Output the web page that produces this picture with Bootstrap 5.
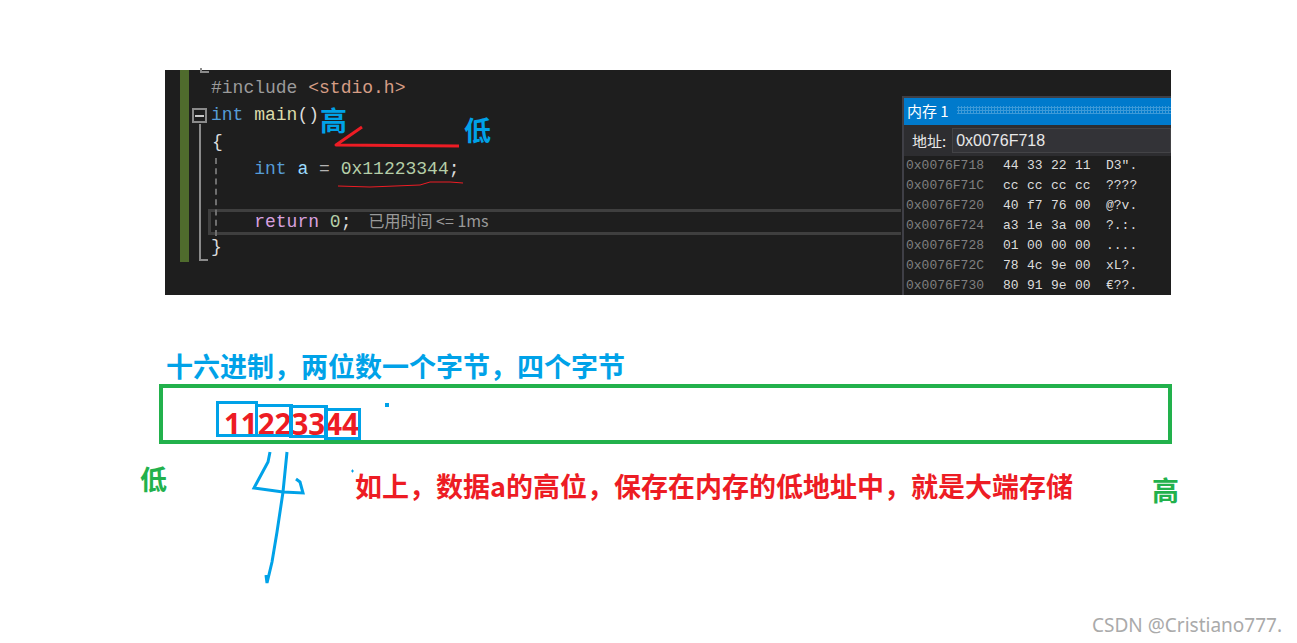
<!DOCTYPE html>
<html lang="zh-CN">
<head>
<meta charset="utf-8">
<title>大端存储</title>
<link href="https://cdn.jsdelivr.net/npm/bootstrap@5.3.0/dist/css/bootstrap.min.css" rel="stylesheet">
<style>
body{background:#fff;font-family:"Noto Sans CJK SC","Liberation Sans",sans-serif}
.stage{width:1297px;height:643px;overflow:hidden;padding:70px 126px 0 165px}
.editor{width:1006px;height:225px;background:#1e1e1e;color:#dcdcdc;font:18px/27px "Liberation Mono","Noto Sans CJK SC",monospace}
.gutter{width:9px;height:192px;margin-left:15px;background:#4f6b2d;flex:none}
.fold{width:22px;flex:none;margin-left:-1px;padding-top:38px}
.fold-box{width:15px;height:15px;margin-left:4px;border:2px solid #8a8a8a;display:flex;align-items:center;justify-content:center}
.fold-box i{display:block;width:9px;height:2px;background:#c8c8c8}
.fold-line{width:9px;height:137px;margin-left:11px;margin-top:1px;border-left:2px solid #8a8a8a;border-bottom:2px solid #8a8a8a}
.fold-top{position:absolute;left:35px;top:-2px;width:9px;height:5px;border-left:2px solid #8a8a8a;border-bottom:2px solid #8a8a8a}
.code{padding-top:5px;flex:1}
.cl{height:27px;margin-left:1px;white-space:pre}
.brace{margin-left:1px}
.cl-cur{height:24px;line-height:21px;padding-left:1px;position:relative;white-space:pre}
.cur-box{position:absolute;left:-2px;top:-1px;width:693px;height:26px;border:3px solid #3f3f3f;border-right:0}
.dash{position:absolute;left:50px;top:88px;height:78px;border-left:2px dashed #6f6f6f}
.k{color:#569cd6}.f{color:#dcdcaa}.v{color:#9cdcfe}.n{color:#b5cea8}.o{color:#b4b4b4}.pp{color:#9b9b9b}.s{color:#d69d85}.r{color:#d8a0df}
.hint{color:#999;font:16px/21px "Noto Sans CJK SC",sans-serif;margin-left:17px}
.memwin{position:absolute;left:737px;top:26px;width:269px;height:199px;background:#1e1e1e;border-left:2px solid #3f3f46;border-top:2px solid #3f3f46;overflow:hidden}
.memtitle{height:27px;background:#007acc;color:#fff;font:15px "Noto Sans CJK SC",sans-serif;padding:0 0 3px 3px;gap:8px}
.memtitle b{flex:1;height:8px;font-weight:400;background-image:radial-gradient(#3d9ad8 1px,transparent 1.2px);background-size:3px 3px}
.memaddr{height:31px;background:#2d2d30;color:#e8e8e8;font:15px "Noto Sans CJK SC",sans-serif;padding:3px 0 3px 8px;gap:6px}
.memaddr span:last-child{flex:1;height:25px;background:#333337;border:1px solid #434346;padding-left:3px;line-height:23px;font-family:"Liberation Sans",sans-serif;font-size:16px}
.memrows{font:13px/20px "Liberation Mono",monospace;padding:0 0 0 2px;color:#dcdcdc}
.memrows .a{width:97px;color:#808080;flex:none}
.memrows .h{width:24px;flex:none}
.memrows .t{margin-left:7px}
.head-blue{color:#00a2e8;font-size:27px;font-weight:700;line-height:36px;margin:53px 0 0 1px;white-space:nowrap}
.greenbox{width:1013px;height:60px;margin:0 0 0 -6px;border:4px solid #22b14c;position:relative}
.digits{position:absolute;left:61px;top:18px;color:#ed1c24;font:700 29.500px/36px "Noto Sans",sans-serif}
.row-note{margin:17px 0 0 -25px;white-space:nowrap;font-size:27px;font-weight:700;line-height:36px}
.low-g{color:#22b14c;width:215px;flex:none}
.note{color:#ed1c24;margin-top:7px;width:797px;flex:none}
.high-g{color:#22b14c;margin-top:11px}
.ann{position:absolute;font-size:27px;font-weight:700;line-height:36px;color:#00a2e8}
.ink{position:absolute;left:0;top:0;pointer-events:none}
.wm{position:absolute;left:1092px;top:610px;font:19px/30px "Noto Sans",sans-serif;color:#aaa;white-space:nowrap}
</style>
</head>
<body>
<div class="stage position-relative">
  <div class="editor d-flex position-relative">
    <div class="gutter"></div>
    <div class="fold">
      <div class="fold-box"><i></i></div>
      <div class="fold-line"></div>
    </div>
    <div class="fold-top"></div>
    <div class="code">
      <div class="cl"><span class="pp">#include</span> <span class="s">&lt;stdio.h&gt;</span></div>
      <div class="cl"><span class="k">int</span> <span class="f">main</span>()</div>
      <div class="cl"><span class="brace">{</span></div>
      <div class="cl">    <span class="k">int</span> <span class="v">a</span> <span class="o">=</span> <span class="n">0x11223344</span>;</div>
      <div class="cl"></div>
      <div class="cl-cur"><span class="cur-box"></span>    <span class="r">return</span> <span class="n">0</span>;<span class="hint">已用时间 &lt;= 1ms</span></div>
      <div class="cl">}</div>
    </div>
    <div class="dash"></div>
    <div class="memwin">
      <div class="memtitle d-flex align-items-center"><span>内存 1</span><b></b></div>
      <div class="memaddr d-flex align-items-center"><span>地址:</span><span>0x0076F718</span></div>
      <div class="memrows">
        <div class="d-flex"><span class="a">0x0076F718</span><span class="h">44</span><span class="h">33</span><span class="h">22</span><span class="h">11</span><span class="t">D3″.</span></div>
        <div class="d-flex"><span class="a">0x0076F71C</span><span class="h">cc</span><span class="h">cc</span><span class="h">cc</span><span class="h">cc</span><span class="t">????</span></div>
        <div class="d-flex"><span class="a">0x0076F720</span><span class="h">40</span><span class="h">f7</span><span class="h">76</span><span class="h">00</span><span class="t">@?v.</span></div>
        <div class="d-flex"><span class="a">0x0076F724</span><span class="h">a3</span><span class="h">1e</span><span class="h">3a</span><span class="h">00</span><span class="t">?.:.</span></div>
        <div class="d-flex"><span class="a">0x0076F728</span><span class="h">01</span><span class="h">00</span><span class="h">00</span><span class="h">00</span><span class="t">....</span></div>
        <div class="d-flex"><span class="a">0x0076F72C</span><span class="h">78</span><span class="h">4c</span><span class="h">9e</span><span class="h">00</span><span class="t">xL?.</span></div>
        <div class="d-flex"><span class="a">0x0076F730</span><span class="h">80</span><span class="h">91</span><span class="h">9e</span><span class="h">00</span><span class="t">€??.</span></div>
      </div>
    </div>
  </div>

  <div class="head-blue">十六进制，两位数一个字节，四个字节</div>
  <div class="greenbox"><div class="digits">11223344</div></div>
  <div class="row-note d-flex">
    <div class="low-g">低</div>
    <div class="note">如上，数据a的高位，保存在内存的低地址中，就是大端存储</div>
    <div class="high-g">高</div>
  </div>

  <div class="ann" style="left:320px;top:102px">高</div>
  <div class="ann" style="left:464px;top:112px">低</div>

  <svg class="ink" width="1297" height="643" viewBox="0 0 1297 643" fill="none">
    <g stroke="#ed1c24" stroke-linejoin="round">
      <path d="M362 127L336 145L459 146" stroke-width="3"/>
      <path d="M338 186L370 187L420 185L430 182L450 182L463 183" stroke-width="1"/>
    </g>
    <g stroke="#00a2e8" stroke-width="3">
      <rect x="217.500" y="402.500" width="39" height="33"/>
      <rect x="256.500" y="405.500" width="35" height="30"/>
      <rect x="290.500" y="406.500" width="36" height="30"/>
      <rect x="325.500" y="409.500" width="34" height="29"/>
      <path d="M270 452L268 462L254 488L283 492L303 493L300 482L296 479"/>
      <path d="M287 452L283 492L277 532L272 562L267 583M266 575L267 583"/>
    </g>
    <rect x="385" y="403" width="4" height="4" fill="#00a2e8"/>
    <path d="M351 471h3M352.500 469.500v3" stroke="#00a2e8"/>
  </svg>

  <div class="wm">CSDN @Cristiano777.</div>
</div>
</body>
</html>
